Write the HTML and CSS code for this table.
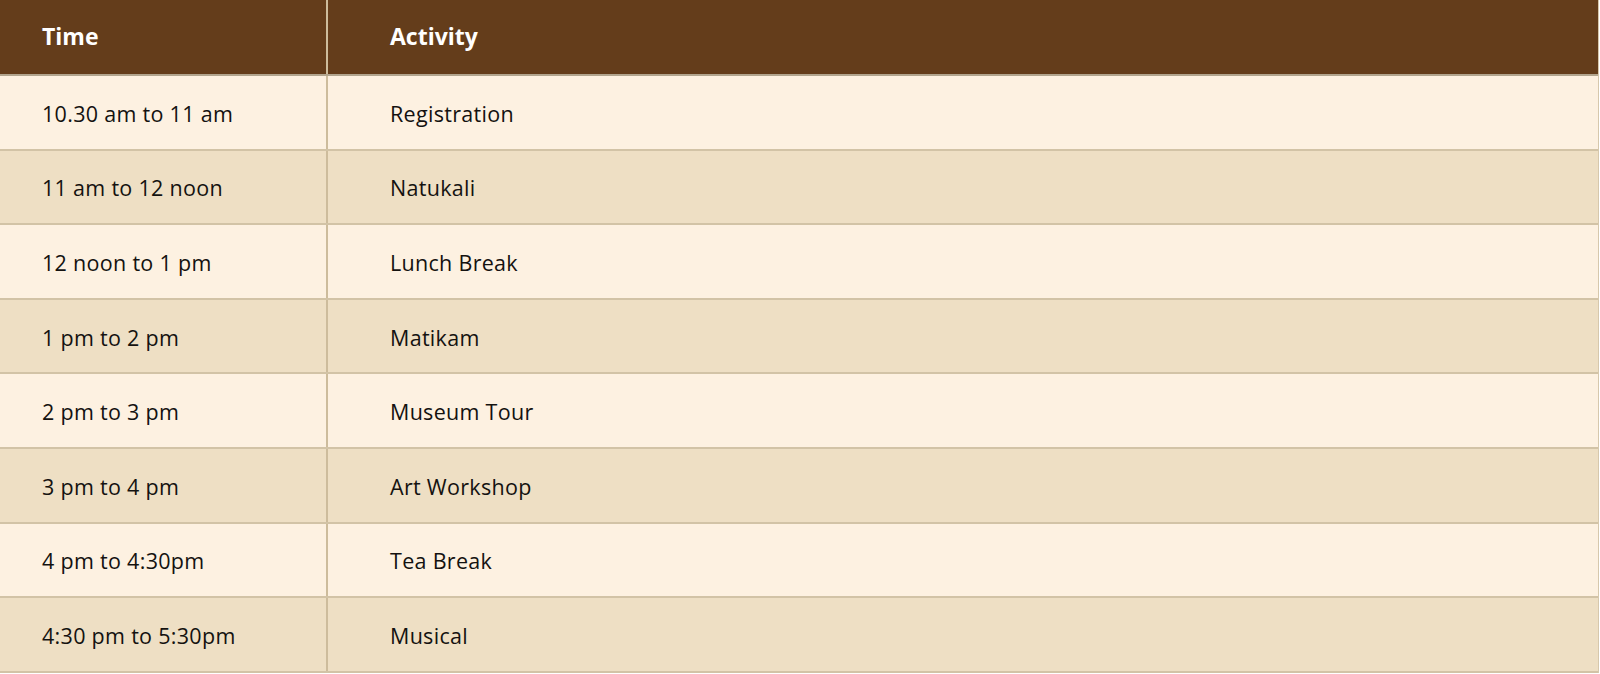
FILE: index.html
```html
<!DOCTYPE html>
<html lang="en">
<head>
<meta charset="utf-8">
<title>Schedule</title>
<link rel="stylesheet" href="styles.css">
</head>
<body>
<div class="schedule">
  <div class="row head">
    <div class="cell time">Time</div>
    <div class="cell act">Activity</div>
  </div>
  <div class="row light">
    <div class="cell time">10.30 am to 11 am</div>
    <div class="cell act">Registration</div>
  </div>
  <div class="row dark">
    <div class="cell time">11 am to 12 noon</div>
    <div class="cell act">Natukali</div>
  </div>
  <div class="row light">
    <div class="cell time">12 noon to 1 pm</div>
    <div class="cell act">Lunch Break</div>
  </div>
  <div class="row dark">
    <div class="cell time">1 pm to 2 pm</div>
    <div class="cell act">Matikam</div>
  </div>
  <div class="row light">
    <div class="cell time">2 pm to 3 pm</div>
    <div class="cell act">Museum Tour</div>
  </div>
  <div class="row dark">
    <div class="cell time">3 pm to 4 pm</div>
    <div class="cell act">Art Workshop</div>
  </div>
  <div class="row light">
    <div class="cell time">4 pm to 4:30pm</div>
    <div class="cell act">Tea Break</div>
  </div>
  <div class="row dark">
    <div class="cell time">4:30 pm to 5:30pm</div>
    <div class="cell act">Musical</div>
  </div>
</div>
</body>
</html>
```
FILE: styles.css
```css
html, body {
  margin: 0;
  padding: 0;
  background: #ffffff;
}

.schedule {
  width: 1599px;
  font-family: "Open Sans", "Liberation Sans", sans-serif;
  color: #141210;
  border-right: 1px solid #d6c8ac;
  box-sizing: border-box;
}

.row {
  display: flex;
  height: 74.6px;
  box-sizing: border-box;
  border-bottom: 2px solid #d2c3a6;
}

.row.head {
  height: 76px;
  background: #643d1b;
  border-bottom-color: #b2a58e;
  color: #ffffff;
}

.row.light {
  background: #fdf1e1;
}

.row.dark {
  background: #eedfc4;
}

.cell {
  display: flex;
  align-items: center;
  box-sizing: border-box;
  font-size: 21.5px;
  font-weight: 500;
  letter-spacing: 0.3px;
  padding-top: 2px;
}

.head .cell {
  font-size: 23px;
  font-weight: 700;
  letter-spacing: 0;
  padding-top: 0;
  padding-bottom: 2px;
}

.cell.time {
  width: 328px;
  padding-left: 42px;
  border-right: 2px solid #cdbc9c;
}

.cell.act {
  flex: 1;
  padding-left: 62px;
}
```
